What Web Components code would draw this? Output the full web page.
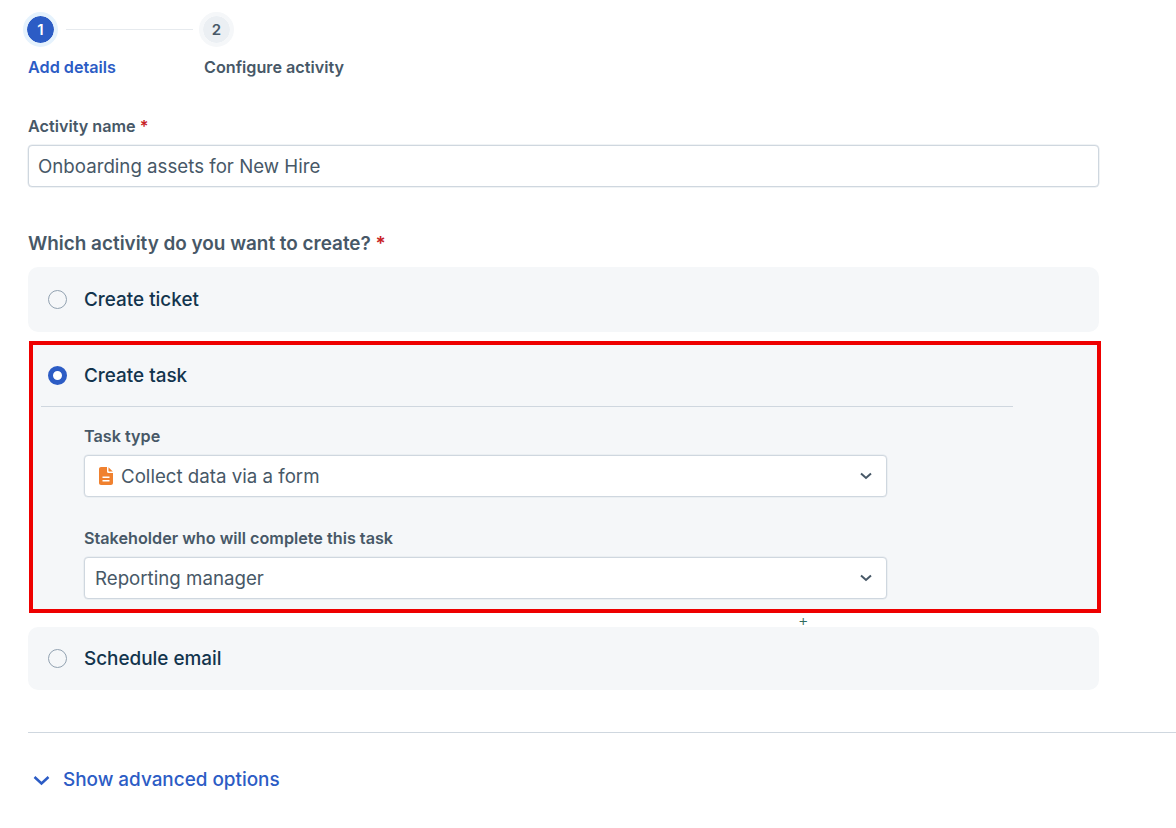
<!DOCTYPE html>
<html>
<head>
<meta charset="utf-8">
<title>Add details</title>
<style>
  html, body { margin: 0; padding: 0; background: #fff; }
  body { font-family: Inter, "Noto Sans", sans-serif; width: 1176px; height: 828px; overflow: hidden; }
</style>
</head>
<body>
<activity-form>
  <form-stepper slot="stepper"></form-stepper>
  <form-field slot="name" label="Activity name" required>
    <text-box>Onboarding assets for New Hire</text-box>
  </form-field>
  <choice-group slot="choice" label="Which activity do you want to create?">
    <choice-card label="Create ticket"></choice-card>
    <choice-card label="Create task" checked>
      <form-field label="Task type" small>
        <text-box select width="803">
          <svg slot="icon" width="16" height="20" viewBox="0 0 16 20"><path fill="#f0812f" d="M3 1h6v4.500c0 .9.6 1.500 1.500 1.500H15v10c0 1.100-.9 2-2 2H3c-1.100 0-2-.9-2-2V3c0-1.100.9-2 2-2z"/><path fill="#f0812f" d="M10.500 1.300l4.300 4.200h-3.800c-.3 0-.5-.2-.5-.5z"/><path stroke="#fff" stroke-width="1.500" d="M4.500 11.200h7M4.500 14.800h7"/></svg>
          Collect data via a form
        </text-box>
      </form-field>
      <form-field label="Stakeholder who will complete this task" small>
        <text-box select width="803">Reporting manager</text-box>
      </form-field>
    </choice-card>
    <choice-card label="Schedule email"></choice-card>
  </choice-group>
  <advanced-toggle slot="footer">Show advanced options</advanced-toggle>
</activity-form>

<script>
class ActivityForm extends HTMLElement {
  constructor() {
    super();
    this.attachShadow({ mode: 'open' });
    this.shadowRoot.innerHTML = `
    <style>
    :host { display: block; position: relative; padding: 12px 0 0 28px; }
    .name { margin-top: 39px; width: 1071px; }
    .choice { margin-top: 45px; width: 1071px; }
    .rule { margin-top: 42px; height: 1px; background: #cfd7df; }
    .footer { margin-top: 34px; }
    </style>
    <slot name="stepper"></slot>
    <div class="name"><slot name="name"></slot></div>
    <div class="choice"><slot name="choice"></slot></div>
    <div class="rule"></div>
    <div class="footer"><slot name="footer"></slot></div>
    `;
  }
}

class FormStepper extends HTMLElement {
  constructor() {
    super();
    this.attachShadow({ mode: 'open' });
    this.shadowRoot.innerHTML = `
    <style>
    :host { display: block; }
    .track { display: flex; align-items: center; height: 35px; margin-left: -5px; }
    .dot {
      box-sizing: border-box; width: 35px; height: 35px; border-radius: 50%;
      display: flex; align-items: center; justify-content: center;
      font-size: 15px; font-weight: 600;
    }
    .dot.on { background: #2c5cc5; color: #fff; border: 4px solid #e5f2fd; background-clip: padding-box; }
    .dot.off { background: #ebeff3; color: #475867; border: 4px solid #f5f7f9; background-clip: padding-box; }
    .line { width: 127px; height: 1px; background: #e6eaee; margin: 0 6px 0 8px; }
    .labels { display: flex; margin-top: 10px; font-size: 16.200px; font-weight: 600; line-height: 20px; }
    .a { color: #2c5cc5; width: 176px; }
    .b { color: #475867; }
    </style>
    <div class="track">
      <div class="dot on">1</div>
      <div class="line"></div>
      <div class="dot off">2</div>
    </div>
    <div class="labels"><span class="a">Add details</span><span class="b">Configure activity</span></div>
    `;
  }
}

class FormField extends HTMLElement {
  constructor() {
    super();
    const req = this.hasAttribute('required') ? '<span class="req">*</span>' : '';
    this.attachShadow({ mode: 'open' });
    this.shadowRoot.innerHTML = `
    <style>
    :host { display: block; }
    .label { font-size: 16.200px; font-weight: 600; line-height: 20px; color: #475867; margin-bottom: 9px; }
    .req { color: #c82124; }
    </style>
    <div class="label">${this.getAttribute('label')} ${req}</div>
    <slot></slot>
    `;
  }
}

class TextBox extends HTMLElement {
  constructor() {
    super();
    const w = this.getAttribute('width');
    const chevron = this.hasAttribute('select')
      ? `<svg class="chev" width="12" height="8" viewBox="0 0 12 8"><path d="M1 1.500l5 4.500 5-4.500" fill="none" stroke="#475867" stroke-width="2"/></svg>`
      : '';
    this.attachShadow({ mode: 'open' });
    this.shadowRoot.innerHTML = `
    <style>
    :host {
      display: flex; align-items: center; box-sizing: border-box; height: 42px;
      width: ${w ? w + 'px' : '100%'}; padding: 0 14px 0 ${w ? 10 : 9}px;
      background: #fff; border: 1px solid #cfd7df; border-radius: 4px;
      box-shadow: 0 0 0 .5px #e2e7ec;
      font-size: 18.700px; color: #475867;
    }
    .text { flex: 1; white-space: nowrap; }
    ::slotted(svg) { flex: none; margin: 0 7px 0 3px; }
    </style>
    <slot name="icon"></slot>
    <span class="text"><slot></slot></span>
    ${chevron}
    `;
  }
}

class ChoiceGroup extends HTMLElement {
  constructor() {
    super();
    this.attachShadow({ mode: 'open' });
    this.shadowRoot.innerHTML = `
    <style>
    :host { display: block; }
    .label { font-size: 18.900px; font-weight: 600; line-height: 24px; color: #475867; margin-bottom: 11px; }
    .req { color: #c82124; }
    .list { display: flex; flex-direction: column; position: relative; }
    ::slotted(choice-card) { margin-bottom: 14px; }
    ::slotted(choice-card[checked]) { margin-top: -5px; }
    ::slotted(choice-card:last-child) { margin-bottom: 0; }
    </style>
    <div class="label">${this.getAttribute('label')} <span class="req">*</span></div>
    <div class="list"><slot></slot></div>
    `;
  }
}

class ChoiceCard extends HTMLElement {
  constructor() {
    super();
    const checked = this.hasAttribute('checked');
    this.attachShadow({ mode: 'open' });
    this.shadowRoot.innerHTML = `
    <style>
    :host { display: block; position: relative; background: #f5f7f9; border-radius: 10px; }
    :host([checked]) { border: 4px solid #ee0000; border-radius: 0; margin-left: 1px; margin-right: -2px; height: 272px; box-sizing: border-box; }
    :host(:last-child) .head { height: 63px; }
    .head { display: flex; align-items: center; height: 65px; padding-left: 20px; font-size: 18.900px; font-weight: 500; color: #12344d; }
    :host([checked]) .head { height: 61px; padding-left: 15px; }
    .radio { box-sizing: border-box; width: 19px; height: 19px; border-radius: 50%; border: 1.500px solid #92a2b1; margin-right: 17px; }
    .radio.on { border: 5.500px solid #2c5cc5; background: #fff; }
    .body { margin: 0 84px 0 8px; border-top: 1px solid #cfd7df; padding: 19px 0 0 43px; display: flex; flex-direction: column; gap: 31px; }
    .plus { position: absolute; left: 765px; top: 267px; font-size: 16px; font-weight: 300; line-height: 16px; color: #2f6b5e; }
    </style>
    <div class="head"><span class="radio ${checked ? 'on' : ''}"></span>${this.getAttribute('label')}</div>
    ${checked ? '<div class="body"><slot></slot></div><span class="plus">+</span>' : ''}
    `;
  }
}

class AdvancedToggle extends HTMLElement {
  constructor() {
    super();
    this.attachShadow({ mode: 'open' });
    this.shadowRoot.innerHTML = `
    <style>
    :host { display: flex; align-items: center; gap: 13px; padding-left: 5px; font-size: 18.900px; font-weight: 500; color: #2c5cc5; line-height: 26px; }
    </style>
    <svg width="17" height="11" viewBox="0 0 17 11"><path d="M1.500 2l7 6.500 7-6.500" fill="none" stroke="#2c5cc5" stroke-width="2.500"/></svg>
    <slot></slot>
    `;
  }
}

customElements.define('activity-form', ActivityForm);
customElements.define('form-stepper', FormStepper);
customElements.define('form-field', FormField);
customElements.define('text-box', TextBox);
customElements.define('choice-group', ChoiceGroup);
customElements.define('choice-card', ChoiceCard);
customElements.define('advanced-toggle', AdvancedToggle);
</script>
</body>
</html>
